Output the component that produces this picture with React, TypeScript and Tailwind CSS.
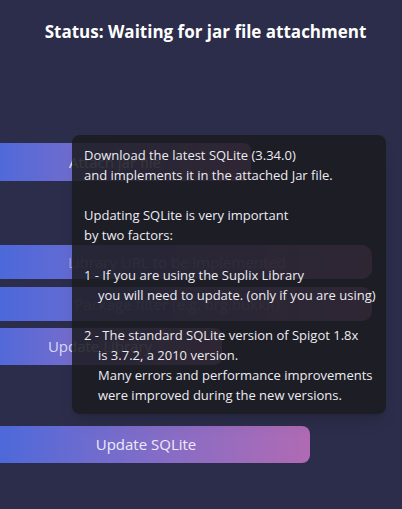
export default function App() {
  const font = { fontFamily: '"Open Sans", "Noto Sans", sans-serif' }
  const grad = 'bg-gradient-to-r from-[#4568dc] to-[#b06ab3]'

  return (
    <div
      className="relative h-[509px] w-[402px] overflow-hidden bg-[#2b2d4a] text-white"
      style={font}
    >
      <h1 className="pt-[20px] pl-[9px] text-center text-[17px] font-bold leading-[24px] text-white">
        Status: Waiting for jar file attachment
      </h1>

      <div className="flex flex-col">
        <button
          className={`${grad} mt-[99px] ml-[-21px] h-[38px] w-[272px] rounded-r-lg text-[15px] text-[#ecebf7]`}
        >
          Attach jar file
        </button>

        <input
          readOnly
          placeholder="Library URL to be implemented"
          className={`${grad} mt-[64px] ml-[-18px] h-[34px] w-[390px] rounded-[10px] text-center text-[15px] text-white outline-none placeholder:text-[#d8d6ee]/55`}
        />
        <input
          readOnly
          placeholder="Package filter (e.g. org.bukkit)"
          className={`${grad} mt-[8px] ml-[-18px] h-[34px] w-[390px] rounded-[10px] text-center text-[15px] text-white outline-none placeholder:text-[#d8d6ee]/55`}
        />

        <button
          className={`${grad} mt-[7px] ml-[-22px] h-[37px] w-[244px] rounded-r-lg text-[15px] text-[#dcdaf2]`}
        >
          Update Library
        </button>

        <button
          className={`${grad} mt-[61px] ml-[-18px] h-[37px] w-[328px] rounded-r-lg text-[15px] text-[#ecebf7]`}
        >
          Update SQLite
        </button>
      </div>

      {/* tooltip over the Update SQLite button */}
      <div className="absolute left-[72px] top-[135px] h-[279px] w-[314px] rounded-lg bg-[#1c1c20]/[0.87] pl-[12px] pt-[10px] text-[13px] leading-[20px] text-[#ececf2] shadow-lg">
        <div className="whitespace-nowrap">
          <p>Download the latest SQLite (3.34.0)</p>
          <p>and implements it in the attached Jar file.</p>
          <p>&nbsp;</p>
          <p>Updating SQLite is very important</p>
          <p>by two factors:</p>
          <p>&nbsp;</p>
          <p>1 - If you are using the Suplix Library</p>
          <p className="pl-[14px]">you will need to update. (only if you are using)</p>
          <p>&nbsp;</p>
          <p>2 - The standard SQLite version of Spigot 1.8x</p>
          <p className="pl-[14px]">is 3.7.2, a 2010 version.</p>
          <p className="pl-[14px]">Many errors and performance improvements</p>
          <p className="pl-[14px]">were improved during the new versions.</p>
        </div>
      </div>
    </div>
  )
}
